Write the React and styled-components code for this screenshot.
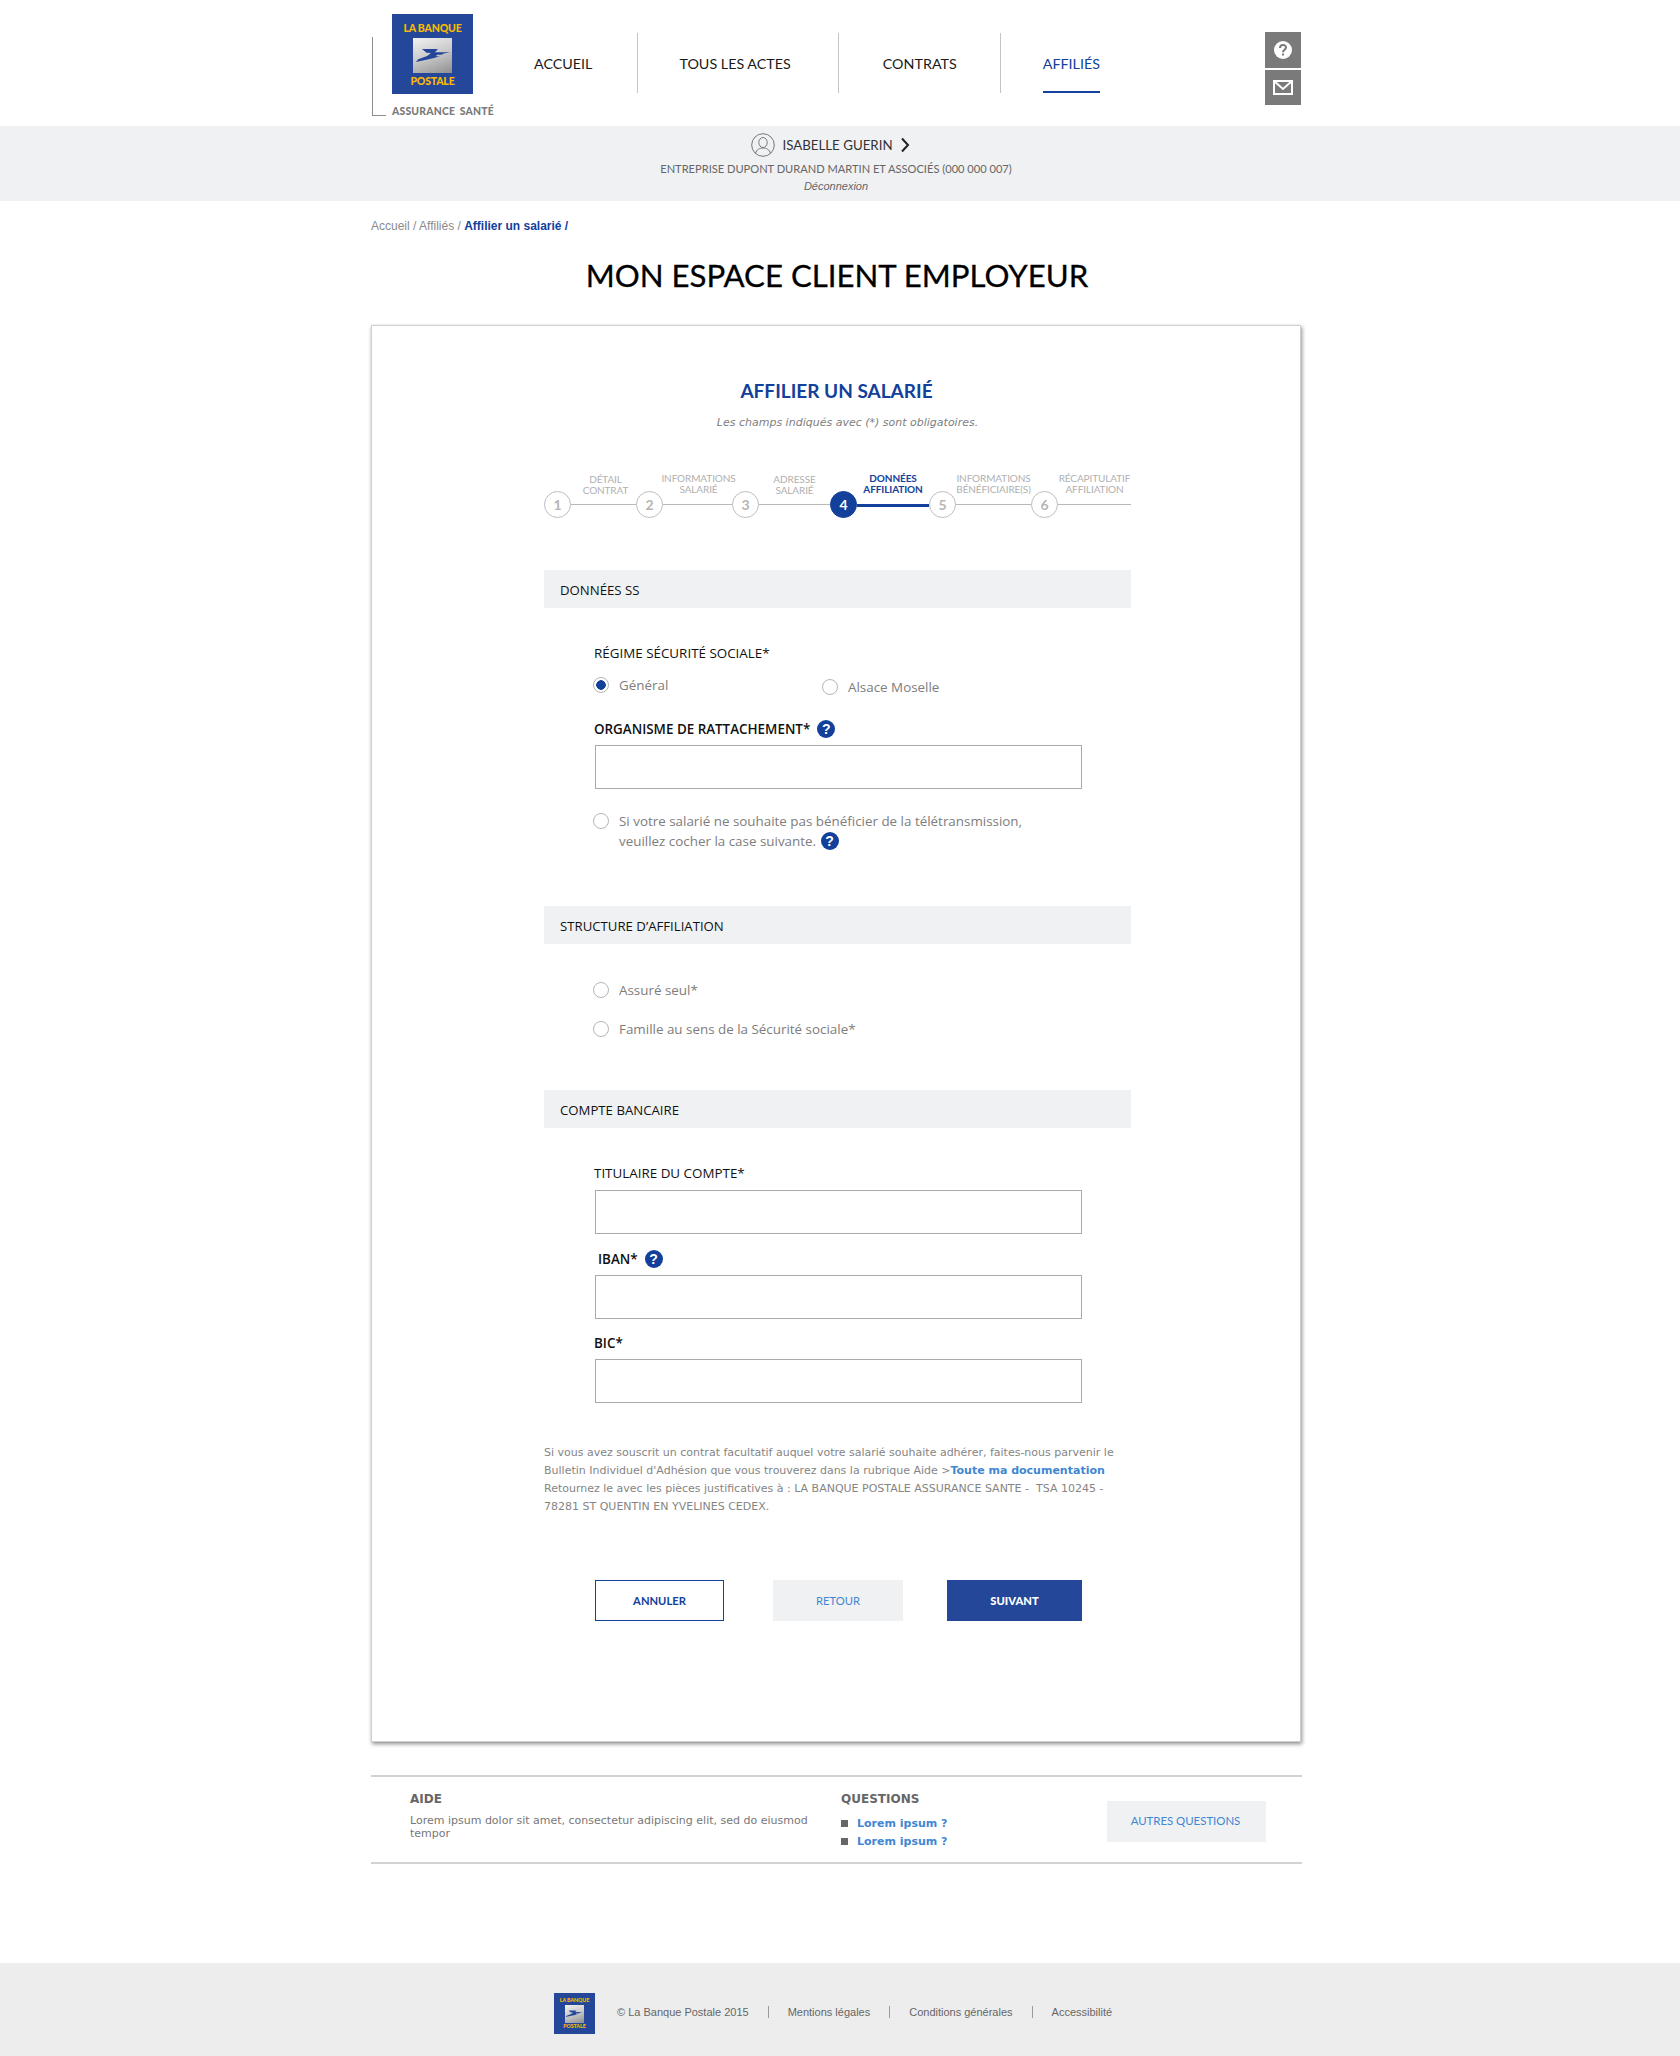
import React from "react";
import styled, { createGlobalStyle } from "styled-components";

const BLUE = "#12409a";
const NAVY = "#24479a";
const LINK = "#3f87d2";
const BAR = "#f0f1f3";

const GlobalStyle = createGlobalStyle`
  * {
    box-sizing: border-box;
  }
  body {
    margin: 0;
    background: #fff;
    font-family: Lato, "Open Sans", sans-serif;
  }
`;

const Container = styled.div`
  width: 930px;
  margin-left: 371px;
`;

const Header = styled(Container)`
  display: flex;
  height: 126px;
`;

const Brand = styled.div`
  position: relative;
  width: 123px;
  padding: 14px 0 0 21px;
  &::before {
    content: "";
    position: absolute;
    left: 1px;
    top: 37px;
    width: 13px;
    height: 78px;
    border-left: 1px solid #8c8c8c;
    border-bottom: 1px solid #8c8c8c;
  }
`;

const LogoBox = styled.div`
  width: 5.06em;
  height: 5em;
  font-size: ${(p) => p.$size}px;
  background: ${NAVY};
  display: flex;
  flex-direction: column;
  align-items: center;
  font-family: Lato, sans-serif;
  font-weight: 900;
  color: #fbb900;
`;

const LogoWord = styled.span`
  font-size: 0.66em;
  line-height: 1;
  letter-spacing: -0.02em;
  white-space: nowrap;
  margin-top: ${(p) => p.$top}em;
`;

const LogoMark = styled.div`
  width: 2.44em;
  height: 2.19em;
  margin-top: 0.3em;
  background: linear-gradient(160deg, #f2f2f2 0%, #c9c9c9 50%, #8f8f8f 100%);
  display: flex;
  align-items: center;
  justify-content: center;
  svg {
    width: 92%;
    height: auto;
    display: block;
  }
`;

function Logo({ size }) {
  return (
    <LogoBox $size={size}>
      <LogoWord $top={0.85}>LA BANQUE</LogoWord>
      <LogoMark>
        <svg viewBox="0 0 36 16">
          <path d="M7 1h16l-3 3.2h15l-6 1.2-2.500 1.300H22l-1 1.600h4l-5 1.600-5 1.200L1 14l2.200-2.800 9-3.200L16 5l-4.500-.2z" fill="#24479a" />
        </svg>
      </LogoMark>
      <LogoWord $top={0.26}>POSTALE</LogoWord>
    </LogoBox>
  );
}

const BrandName = styled.div`
  margin-top: 10px;
  font-size: 10.4px;
  line-height: 14px;
  font-weight: 900;
  letter-spacing: 0.2px;
  color: #7a7a7a;
  white-space: nowrap;
  word-spacing: 2px;
`;

const Nav = styled.nav`
  display: flex;
  margin: 33px 0 0 40px;
  height: 60px;
`;

const NavItem = styled.div`
  padding: 0 ${(p) => p.$right}px 0 ${(p) => p.$left}px;
  border-right: ${(p) => (p.$last ? "none" : "1px solid #c4c4c4")};
`;

const NavText = styled.span`
  display: block;
  height: 60px;
  line-height: 62px;
  font-size: 14.3px;
  white-space: nowrap;
  color: ${(p) => (p.$active ? BLUE : "#1a1a1a")};
  border-bottom: 2px solid ${(p) => (p.$active ? BLUE : "transparent")};
`;

const SideButtons = styled.div`
  margin: 32px 0 0 auto;
  display: flex;
  flex-direction: column;
  gap: 2px;
`;

const SideButton = styled.div`
  width: 36px;
  height: ${(p) => p.$h}px;
  background: #7a7a7a;
  display: flex;
  align-items: center;
  justify-content: center;
`;

const UserBand = styled.div`
  height: 75px;
  background: ${BAR};
  padding: 7px 8px 0 0;
  display: flex;
  flex-direction: column;
  align-items: center;
`;

const UserLine = styled.div`
  display: flex;
  align-items: center;
  gap: 7px;
  height: 24px;
  margin-right: 11px;
  font-size: 13.3px;
  color: #333;
`;

const Company = styled.div`
  margin-top: 3px;
  font-size: 11.1px;
  line-height: 18px;
  color: #666;
`;

const Logout = styled.div`
  margin-top: -1px;
  font-family: "Liberation Sans", sans-serif;
  font-style: italic;
  font-size: 11px;
  line-height: 18px;
  color: #666;
`;

const Breadcrumb = styled.div`
  margin-top: 17px;
  height: 16px;
  font-family: "Liberation Sans", sans-serif;
  font-size: 12px;
  line-height: 16px;
  color: #8a8a8a;
  b {
    color: ${BLUE};
  }
`;

const PageTitle = styled.h1`
  margin: 21px 0 0;
  padding-left: 2px;
  text-align: center;
  font-size: 31.2px;
  line-height: 40px;
  font-weight: 400;
  color: #000;
  -webkit-text-stroke: 0.3px #000;
`;

const Card = styled.section`
  margin-top: 30px;
  height: 1417px;
  background: #fff;
  border: 1px solid #cfcfcf;
  box-shadow: 1px 2px 4px rgba(0, 0, 0, 0.45);
  padding: 53px 0 0 172px;
`;

const Inner = styled.div`
  width: 587px;
`;

const CardTitle = styled.h2`
  margin: 0;
  padding-right: 2px;
  text-align: center;
  font-size: 19px;
  line-height: 24px;
  font-weight: 700;
  color: ${BLUE};
`;

const Required = styled.p`
  margin: 12px 0 0;
  padding-left: 20px;
  text-align: center;
  font-family: "DejaVu Sans", sans-serif;
  font-style: italic;
  font-size: 11px;
  line-height: 16px;
  color: #808080;
`;

const Stepper = styled.div`
  display: flex;
  margin-top: 42px;
  height: 46px;
`;

const Step = styled.div`
  flex: 0 0 ${(p) => p.$width}px;
  display: flex;
  align-items: flex-end;
`;

const StepDot = styled.div`
  flex: 0 0 27px;
  height: 27px;
  margin-bottom: 1px;
  border-radius: 50%;
  border: 1px solid ${(p) => (p.$active ? BLUE : "#bdbdbd")};
  background: ${(p) => (p.$active ? BLUE : "#fff")};
  color: ${(p) => (p.$active ? "#fff" : "#b5b5b5")};
  font-size: 14px;
  font-weight: 700;
  line-height: 25px;
  text-align: center;
`;

const StepBody = styled.div`
  flex: 1;
  min-width: 0;
  display: flex;
  flex-direction: column;
  align-items: center;
  height: 46px;
`;

const StepLabel = styled.div`
  height: 24px;
  margin: ${(p) => (p.$low ? "1px -24px 0 -24px" : "0 -24px")};
  padding-left: ${(p) => p.$nudge || 0}px;
  font-size: 10px;
  line-height: 11px;
  letter-spacing: -0.1px;
  text-align: center;
  white-space: nowrap;
  color: ${(p) => (p.$active ? BLUE : "#b0b0b0")};
  font-weight: ${(p) => (p.$active ? 700 : 400)};
`;

const StepLine = styled.div`
  align-self: stretch;
  margin-top: ${(p) => (p.$low ? "6px" : "7px")};
  height: ${(p) => (p.$active ? 3 : 1)}px;
  background: ${(p) => (p.$active ? BLUE : "#b8b8b8")};
`;

const SectionBar = styled.div`
  margin-top: ${(p) => p.$top}px;
  height: 38px;
  background: ${BAR};
  padding-left: 16px;
  font-family: "Open Sans", sans-serif;
  font-size: 13.2px;
  line-height: 40px;
  color: #111;
`;

const Fields = styled.div`
  padding-left: 50px;
`;

const Label = styled.div`
  display: flex;
  align-items: center;
  gap: 7px;
  height: 20px;
  margin-top: ${(p) => p.$top}px;
  padding-left: ${(p) => p.$indent || 0}px;
  font-family: "Open Sans", sans-serif;
  font-size: 13.4px;
  font-weight: ${(p) => (p.$strong ? 600 : 400)};
  color: #111;
`;

const Field = styled.div`
  margin: ${(p) => p.$top || 6}px 0 0 1px;
  width: 487px;
  height: 44px;
  border: 1px solid #aaa;
  background: #fff;
`;

const Help = styled.span`
  display: inline-block;
  flex: none;
  width: 18px;
  height: 18px;
  margin-left: ${(p) => p.$left || 0}px;
  border-radius: 50%;
  background: ${BLUE};
  color: #fff;
  font-family: "Liberation Sans", sans-serif;
  font-size: 14px;
  font-weight: 700;
  line-height: 18px;
  text-align: center;
`;

const RadioRow = styled.div`
  display: flex;
  align-items: flex-start;
  gap: 10px;
  margin: ${(p) => p.$top || 0}px 0 0 -1px;
  font-family: "Open Sans", sans-serif;
  font-size: 13.4px;
  line-height: 20px;
  color: #7d7d7d;
`;

const RadioPair = styled.div`
  display: flex;
  margin-top: 12px;
  > div:first-child {
    width: 230px;
  }
  > div:last-child {
    position: relative;
    top: ${(p) => p.$shift}px;
  }
`;

const Radio = styled.span`
  flex: none;
  width: 16px;
  height: 16px;
  margin-top: 2px;
  border: 1px solid #b5b5b5;
  border-radius: 50%;
  background: ${(p) => (p.$on ? `radial-gradient(circle, ${BLUE} 0 4.5px, #fff 5px)` : "#fff")};
`;

const Note = styled.p`
  margin: 41px 0 0;
  font-family: "DejaVu Sans", sans-serif;
  font-size: 11px;
  line-height: 18px;
  color: #858585;
  white-space: nowrap;
  b {
    color: ${LINK};
  }
`;

const Actions = styled.div`
  display: flex;
  margin: 64px 0 0 51px;
  width: 488px;
`;

const Button = styled.div`
  width: ${(p) => p.$width}px;
  margin-left: ${(p) => p.$left || 0}px;
  height: 41px;
  font-family: Lato, sans-serif;
  font-size: 11.2px;
  line-height: 39px;
  text-align: center;
  border: 1px solid ${(p) => p.$border};
  background: ${(p) => p.$bg};
  color: ${(p) => p.$color};
  font-weight: ${(p) => (p.$bold ? 900 : p.$medium ? 700 : 400)};
`;

const HelpStrip = styled.div`
  width: 931px;
  margin-top: 33px;
  height: 89px;
  padding-left: 39px;
  border-top: 2px solid #d2d2d2;
  border-bottom: 2px solid #d2d2d2;
  display: flex;
  font-family: "DejaVu Sans", sans-serif;
`;

const HelpTitle = styled.div`
  margin-top: 14px;
  font-size: 12px;
  font-weight: 700;
  line-height: 16px;
  color: #666;
`;

const AideColumn = styled.div`
  width: 431px;
`;

const AideText = styled.div`
  margin-top: 7px;
  width: 405px;
  font-size: 11px;
  line-height: 13px;
  color: #777;
`;

const QuestionColumn = styled.div`
  width: 266px;
`;

const QuestionList = styled.ul`
  list-style: none;
  margin: 7px 0 0;
  padding: 0;
`;

const QuestionItem = styled.li`
  display: flex;
  align-items: center;
  gap: 9px;
  height: 18px;
  font-size: 11px;
  font-weight: 700;
  color: ${LINK};
  &::before {
    content: "";
    width: 7px;
    height: 7px;
    background: #666;
  }
`;

const MoreButton = styled.div`
  margin-top: 24px;
  padding-right: 2px;
  width: 159px;
  height: 41px;
  background: ${BAR};
  font-family: Lato, sans-serif;
  font-size: 11.4px;
  line-height: 40px;
  text-align: center;
  color: ${LINK};
`;

const Footer = styled.footer`
  margin-top: 99px;
  height: 94px;
  background: #ededed;
  padding: 30px 0 0 554px;
  display: flex;
  font-family: "Liberation Sans", sans-serif;
  font-size: 11px;
  color: #666;
`;

const FooterLinks = styled.div`
  display: flex;
  margin-left: 22px;
  height: 12px;
  margin-top: 13px;
  align-items: center;
`;

const FooterLink = styled.span`
  white-space: nowrap;
  padding-right: 19px;
  margin-right: 19px;
  border-right: ${(p) => (p.$last ? "none" : "1px solid #999")};
`;

const steps = [
  { n: 1, width: 92, label: ["DÉTAIL", "CONTRAT"], low: true, nudge: 4 },
  { n: 2, width: 96, label: ["INFORMATIONS", "SALARIÉ"], nudge: 2 },
  { n: 3, width: 98, label: ["ADRESSE", "SALARIÉ"], low: true },
  { n: 4, width: 99, label: ["DONNÉES", "AFFILIATION"], active: true },
  { n: 5, width: 102, label: ["INFORMATIONS", "BÉNÉFICIAIRE(S)"] },
  { n: 6, width: 100, label: ["RÉCAPITULATIF", "AFFILIATION"] }
];

const nav = [
  { text: "ACCUEIL", left: 0, right: 45 },
  { text: "TOUS LES ACTES", left: 41, right: 47 },
  { text: "CONTRATS", left: 44, right: 43 },
  { text: "AFFILIÉS", left: 42, right: 0, active: true, last: true }
];

export default function App() {
  return (
    <>
      <GlobalStyle />
      <Header>
        <Brand>
          <Logo size={16} />
          <BrandName>ASSURANCE SANTÉ</BrandName>
        </Brand>
        <Nav>
          {nav.map((item) => (
            <NavItem key={item.text} $left={item.left} $right={item.right} $last={item.last}>
              <NavText $active={item.active}>{item.text}</NavText>
            </NavItem>
          ))}
        </Nav>
        <SideButtons>
          <SideButton $h={36}>
            <svg width="20" height="20" viewBox="0 0 20 20">
              <circle cx="10" cy="10" r="9" fill="#fff" />
              <path d="M7 8c0-4 6-4 6-.4 0 2-3 2.200-3 4.600" fill="none" stroke="#7a7a7a" strokeWidth="2" />
              <rect x="9" y="13.500" width="2" height="2" fill="#7a7a7a" />
            </svg>
          </SideButton>
          <SideButton $h={35}>
            <svg width="20" height="15" viewBox="0 0 20 15">
              <rect x="1" y="1" width="18" height="13" fill="none" stroke="#fff" strokeWidth="2" />
              <path d="M1 1l9 8 9-8" fill="none" stroke="#fff" strokeWidth="2" />
            </svg>
          </SideButton>
        </SideButtons>
      </Header>

      <UserBand>
        <UserLine>
          <svg width="24" height="24" viewBox="0 0 24 24" fill="none" stroke="#777" strokeWidth="1">
            <circle cx="12" cy="12" r="11.300" />
            <ellipse cx="12" cy="9.500" rx="4.200" ry="5" />
            <path d="M4.500 20.500c1-4 4-5.500 7.500-5.500s6.500 1.500 7.500 5.500" />
          </svg>
          ISABELLE GUERIN
          <svg width="10" height="16" viewBox="0 0 10 16" fill="none" stroke="#222" strokeWidth="2">
            <path d="M2 1.500l6 6.500-6 6.500" />
          </svg>
        </UserLine>
        <Company>ENTREPRISE DUPONT DURAND MARTIN ET ASSOCIÉS (000 000 007)</Company>
        <Logout>Déconnexion</Logout>
      </UserBand>

      <Container>
        <Breadcrumb>
          Accueil / Affiliés / <b>Affilier un salarié /</b>
        </Breadcrumb>
        <PageTitle>MON ESPACE CLIENT EMPLOYEUR</PageTitle>

        <Card>
          <Inner>
            <CardTitle>AFFILIER UN SALARIÉ</CardTitle>
            <Required>Les champs indiqués avec (*) sont obligatoires.</Required>

            <Stepper>
              {steps.map((s) => (
                <Step key={s.n} $width={s.width}>
                  <StepDot $active={s.active}>{s.n}</StepDot>
                  <StepBody>
                    <StepLabel $active={s.active} $low={s.low} $nudge={s.nudge}>
                      {s.label[0]}
                      <br />
                      {s.label[1]}
                    </StepLabel>
                    <StepLine $active={s.active} $low={s.low} />
                  </StepBody>
                </Step>
              ))}
            </Stepper>

            <SectionBar $top={51}>DONNÉES SS</SectionBar>
            <Fields>
              <Label $top={35}>RÉGIME SÉCURITÉ SOCIALE*</Label>
              <RadioPair $shift={2}>
                <RadioRow>
                  <Radio $on />
                  Général
                </RadioRow>
                <RadioRow>
                  <Radio />
                  Alsace Moselle
                </RadioRow>
              </RadioPair>
              <Label $top={24} $strong>
                ORGANISME DE RATTACHEMENT* <Help>?</Help>
              </Label>
              <Field />
              <RadioRow $top={22}>
                <Radio />
                <div>
                  Si votre salarié ne souhaite pas bénéficier de la télétransmission,
                  <br />
                  veuillez cocher la case suivante. <Help $left={1}>?</Help>
                </div>
              </RadioRow>
            </Fields>

            <SectionBar $top={55}>STRUCTURE D’AFFILIATION</SectionBar>
            <Fields>
              <RadioRow $top={36}>
                <Radio />
                Assuré seul*
              </RadioRow>
              <RadioRow $top={19}>
                <Radio />
                Famille au sens de la Sécurité sociale*
              </RadioRow>
            </Fields>

            <SectionBar $top={51}>COMPTE BANCAIRE</SectionBar>
            <Fields>
              <Label $top={35}>TITULAIRE DU COMPTE*</Label>
              <Field $top={7} />
              <Label $top={15} $indent={4} $strong>
                IBAN* <Help>?</Help>
              </Label>
              <Field />
              <Label $top={14} $strong>
                BIC*
              </Label>
              <Field />
            </Fields>

            <Note>
              Si vous avez souscrit un contrat facultatif auquel votre salarié souhaite adhérer, faites-nous parvenir le
              <br />
              Bulletin Individuel d'Adhésion que vous trouverez dans la rubrique Aide &gt;<b>Toute ma documentation</b>
              <br />
              Retournez le avec les pièces justificatives à : LA BANQUE POSTALE ASSURANCE SANTE -&nbsp; TSA 10245 -
              <br />
              78281 ST QUENTIN EN YVELINES CEDEX.
            </Note>

            <Actions>
              <Button $width={129} $border={BLUE} $bg="#fff" $color={BLUE} $medium>
                ANNULER
              </Button>
              <Button $width={130} $left={49} $border={BAR} $bg={BAR} $color={LINK}>
                RETOUR
              </Button>
              <Button $width={135} $left={44} $border={NAVY} $bg={NAVY} $color="#fff" $bold>
                SUIVANT
              </Button>
            </Actions>
          </Inner>
        </Card>

        <HelpStrip>
          <AideColumn>
            <HelpTitle>AIDE</HelpTitle>
            <AideText>Lorem ipsum dolor sit amet, consectetur adipiscing elit, sed do eiusmod tempor</AideText>
          </AideColumn>
          <QuestionColumn>
            <HelpTitle>QUESTIONS</HelpTitle>
            <QuestionList>
              <QuestionItem>Lorem ipsum ?</QuestionItem>
              <QuestionItem>Lorem ipsum ?</QuestionItem>
            </QuestionList>
          </QuestionColumn>
          <MoreButton>AUTRES QUESTIONS</MoreButton>
        </HelpStrip>
      </Container>

      <Footer>
        <Logo size={8.100} />
        <FooterLinks>
          <FooterLink>© La Banque Postale 2015</FooterLink>
          <FooterLink>Mentions légales</FooterLink>
          <FooterLink>Conditions générales</FooterLink>
          <FooterLink $last>Accessibilité</FooterLink>
        </FooterLinks>
      </Footer>
    </>
  );
}
